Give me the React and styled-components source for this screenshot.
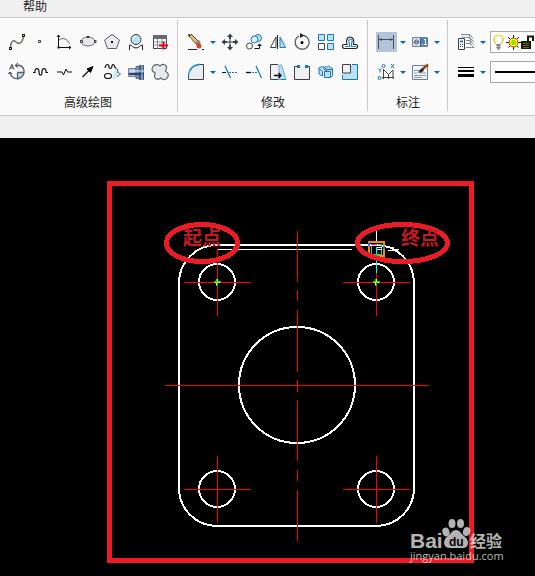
import React from 'react'
import styled, { createGlobalStyle } from 'styled-components'

const GlobalStyle = createGlobalStyle`
  body {
    margin: 0;
    background: #000;
    font-family: "Noto Sans CJK SC", sans-serif;
    font-size: 12px;
    color: #1e1e1e;
  }
`

const Page = styled.div`
  min-height: 100vh;
  display: flex;
  flex-direction: column;
`

const MenuBar = styled.nav`
  display: flex;
  height: 17px;
  padding-left: 23px;
  background: #f0f0f0;
  border-bottom: 1px solid #c8c8c8;
`

const MenuItem = styled.a`
  color: #1e1e1e;
  font-size: 12px;
  line-height: 12px;
  text-decoration: none;
`

const Ribbon = styled.header`
  display: flex;
  padding: 2px 0 4px;
  overflow: hidden;
  background: #fafafa;
  border-bottom: 1px solid #c8c8c8;
`

const Panel = styled.section`
  flex: none;
  display: flex;
  flex-direction: column;
  gap: 6px;
  padding: 10px 5px 0 ${props => props.$left || 6}px;
  border-right: 1px solid #c8c8c8;
`

const ToolRow = styled.div`
  display: flex;
  align-items: center;
  height: 24px;
`

const PanelTitle = styled.h2`
  margin: 3px 0 0;
  font-size: 12px;
  font-weight: 400;
  line-height: 18px;
  text-align: center;
`

const ToolButton = styled.button`
  width: 24px;
  height: 24px;
  padding: 0;
  border: 0;
  background: none;

  svg {
    display: block;
  }
`

const ArrowButton = styled.button`
  width: 10px;
  height: 24px;
  padding: 0;
  border: 0;
  background: none;

  svg {
    display: block;
  }
`

const Combo = styled.label`
  position: relative;
  width: 180px;
  height: 20px;
  margin-left: 2px;
  border: 1px solid #a8a8a8;
  background: #fff;

  select {
    position: absolute;
    inset: 0;
    width: 100%;
    opacity: 0;
  }

  svg {
    display: block;
  }
`

const TabStrip = styled.div`
  height: 22px;
  background: #f0f0f0;
`

const Canvas = styled.main`
  flex: 1;
  overflow: hidden;
  background: #000;

  svg {
    display: block;
  }
`

const dark = '#3c4048'
const blue = '#1a78c8'
const pale = '#b9e2f4'

const icons = {
  spline: (
    <>
      <path d="M6.500 17C7 11 9.500 9.500 12 12S18.500 14 19.500 6" stroke="#777566" strokeWidth="1.500" />
      <path d="M5.500 17.500h2v2h-2zM18.500 4.500h2v2h-2z" fill="#fff" stroke="#000" />
    </>
  ),
  point: <path d="M10.500 10.500h2v2h-2z" fill="#fff" stroke={dark} />,
  axes: (
    <>
      <path d="M6.500 5v12.500H19M5 7l1.500-2L8 7M17 16l2 1.500-2 1.500" stroke="#111" />
      <path d="M7 10c4-3 8-1 10.500 3.500" stroke="#666" />
      <path d="M5.500 16.500h2v2h-2z" fill="#111" />
    </>
  ),
  ellipse: (
    <>
      <ellipse cx="12" cy="11.500" rx="7" ry="4.500" fill="#e4e6ea" stroke="#6a6e76" />
      <path d="M4.500 10.500h2v2h-2zM18.500 10.500h1.500v2h-1.500zM11 6.500h2v1h-2z" fill="#fff" stroke="#333" />
    </>
  ),
  polygon: (
    <>
      <path d="M12 4.500l7.500 5.500-3 8.500h-9L4.500 10z" fill="#e8eaee" stroke="#5a5e66" />
      <path d="M11 11h2v2h-2z" fill="#111" />
    </>
  ),
  wipeout: (
    <>
      <circle cx="12" cy="9.500" r="5" fill={pale} stroke={dark} />
      <path d="M5.500 20v-5c3 0 3 3 6.500 3s3.500-3 6.500-3v5" stroke="#222" />
      <path d="M9 9.500c0-2 1-3 3-3" stroke="#fff" />
    </>
  ),
  table: (
    <>
      <path d="M5.500 5.500h13v13h-13z" fill="#fff" stroke={dark} />
      <path d="M5 5h14v4H5z" fill="#666b73" />
      <path d="M5.500 12h13M5.500 15h13M9.500 9v9.500M14 9v9.500" stroke="#8d9299" />
      <path d="M14.500 11.500h2v3h3.500v2h-3.500v3h-2v-3H11v-2h3.500z" fill="#e00b14" />
    </>
  ),
  helix: (
    <>
      <path d="M13.500 12.500h6.500a7 7 0 0 1-6.500 7z" fill={pale} />
      <path d="M20 10a7 7 0 1 1-14 3M12 5.500c4-1 7 1 8 5M13.500 12.500v7M13.500 12.500h6.500" stroke="#5a5e66" strokeWidth="1.300" />
      <path d="M5.500 9.500l2.500-5 2 5M6.500 8h3M14 3l-3 2.500 3 2M4 14l2-2 2 2" stroke={dark} />
    </>
  ),
  wave: <path d="M5 12.500h2c-1-5 4-5 4-1 0 5 3 5 3 0 0-4 5-4 4 1h2" stroke="#111" strokeWidth="1.200" />,
  breakLine: <path d="M5 12h5l1.500 3 2.500-6 1.500 3H20" stroke="#111" />,
  arrow: (
    <>
      <path d="M6.500 17l8-8" stroke="#111" strokeWidth="1.200" />
      <path d="M17 6.500l-2.500 6-3.500-3.500z" fill="#000" stroke="#000" />
    </>
  ),
  sketch: (
    <>
      <path d="M5 8c1-5 4-4 4-1 0 2 3 2 3-1s3-1 3 2" stroke="#111" strokeWidth="1.200" />
      <path d="M15 8c4 0 3 3 2 4 5 0 3 5 0 4 0 4-4 4-5 2l1-4z" fill="#cdeaf8" />
      <path d="M15 8c4 0 3 3 2 4 5 0 3 5 0 4" stroke="#333" strokeDasharray="2 1" />
      <ellipse cx="8" cy="16" rx="3.500" ry="2.500" stroke="#111" strokeWidth="1.200" />
    </>
  ),
  shaft: (
    <>
      <path d="M4.500 8.500H12v8H4.500z" fill="#aebfd3" stroke="#6e8299" />
      <path d="M12 6.500h3v12h-3z" fill="#8097b4" stroke="#52677f" />
      <path d="M15 5h5v15h-5z" fill="#3d5f89" />
      <path d="M5 11h15" stroke="#e9f1f8" />
      <path d="M5 14h15" stroke="#25456d" strokeWidth="2" />
      <path d="M18 5v15" stroke="#bdcbdd" />
    </>
  ),
  cloud: (
    <path
      d="M12 6c3-3 7-1 6.500 2-.3 2-1 2-1 3.500 3 1 3.500 4 2 6-2 3-5 2.500-6.500.5-2 2-6 1.500-6.500-1.500-.2-2 .8-2.500.5-4C3.500 12 3.500 8.500 5 6.500c2-3 5.500-2 7-.5z"
      fill="#e8eaee"
      stroke="#5e6269"
      strokeWidth="1.200"
    />
  ),
  erase: (
    <>
      <path d="M4 5l9 10M7 4l9 9" stroke="#4d3212" />
      <path d="M5 4.500l9 9.500" stroke="#dfae5c" strokeWidth="2.500" />
      <path d="M4 4l3 1-2 2z" fill="#222" />
      <path d="M11 13l4-3 2 3-4 3z" fill="#8a8378" />
      <circle cx="15" cy="16" r="2.500" fill="#d94a1c" />
      <path d="M4 19.500h9M18 19.500h2" stroke="#222" />
    </>
  ),
  move: (
    <>
      <path d="M12 3.500l3 3.500H9zM12 20.500l3-3.500H9zM3.500 12L7 9v6zM20.500 12L17 9v6z" fill={dark} />
      <path d="M12 7v2.500M12 14.500V17M7 12h2.500M14.500 12H17" stroke={dark} strokeWidth="2" />
      <path d="M11 11h2v2h-2z" stroke={dark} />
    </>
  ),
  copy: (
    <>
      <circle cx="16" cy="8" r="3.500" fill={pale} stroke={blue} />
      <circle cx="12.500" cy="9.500" r="3.500" fill="#d7effa" stroke={blue} />
      <circle cx="7.500" cy="16" r="3" fill="#fff" stroke={dark} />
      <path d="M12.500 18.500h5v-3" stroke="#111" />
      <path d="M15 16l2.500-2.500L20 16z" fill="#111" />
    </>
  ),
  mirror: (
    <>
      <path d="M10 7v10.500H4.500z" fill="#fff" stroke={dark} />
      <path d="M14 7v10.500h5.500z" fill={pale} stroke={blue} />
      <path d="M11.500 5v14" stroke="#222" />
    </>
  ),
  rotate: (
    <>
      <path d="M14 5.500a7 7 0 1 1-5 .5" stroke="#5a5e66" strokeWidth="1.300" />
      <path d="M10 3l4.500 2.500L10 8z" fill="#222" />
      <circle cx="12" cy="12.500" r="1.500" fill="#000" />
    </>
  ),
  array: (
    <>
      <path d="M4.500 4.500h6v6h-6zM13.500 4.500h6v6h-6zM13.500 13.500h6v6h-6z" fill={pale} stroke={blue} />
      <path d="M4.500 13.500h6v6h-6z" fill="#fff" stroke={dark} />
    </>
  ),
  offset: (
    <>
      <path d="M6 18.500c-2-1-2-4 0-4h3c-3-10 9-10 6.500 0H18c2 0 2 3 0 4z" fill="#fff" stroke="#222" strokeWidth="1.200" />
      <path d="M7 16.500h4.500v-3c-3-6 5-6 2 0v3H18" stroke="#2582cc" strokeWidth="1.200" />
    </>
  ),
  fillet: (
    <>
      <path d="M4.500 19.500V18C5 10 10 5 19.500 4.500v15z" fill="#ececef" />
      <path d="M4.500 16v3.500h15v-15H16" stroke={dark} />
      <path d="M4.500 16C5 9 9 5 16 4.500" stroke="#2388d4" strokeWidth="1.300" />
    </>
  ),
  trim: (
    <>
      <path d="M4 12.500h4" stroke="#111" />
      <path d="M7 6l5.500 12" stroke={blue} strokeWidth="1.300" />
      <path d="M11 12.500h9" stroke={blue} strokeDasharray="2 1" />
    </>
  ),
  extend: (
    <>
      <path d="M4 12.500h5" stroke="#111" strokeWidth="1.300" />
      <path d="M10 12.500h6" stroke={blue} strokeDasharray="2 1" />
      <path d="M14 6l5.500 12" stroke={blue} strokeWidth="1.300" />
    </>
  ),
  stretch: (
    <>
      <path d="M13 5h2.500l4.500 14.500h-7z" fill={pale} stroke="#6aabd0" />
      <path d="M12 4.500H4.500v15h8" fill="#f0f0f2" stroke={dark} />
      <path d="M15 19.500h5" stroke={blue} />
      <path d="M8 15.500h6M12.500 13l2.500 2.500-2.500 2.500" stroke="#000" strokeWidth="1.300" />
    </>
  ),
  breakShape: (
    <>
      <path d="M4.500 6.500h15v13h-15z" fill="#f0f0f2" />
      <path d="M7 6.500H4.500v13h15v-13H18" stroke={dark} />
      <path d="M7 5h3v3H7zM15 5h3v3h-3z" fill={blue} />
    </>
  ),
  explode: (
    <>
      <path d="M4.500 8l4-1.500 3 2 3-2.500 4 2.500v5M5 9v5l3 2M4.500 8.500l4 2.500v5M12 6l-3 2.500 4 2" fill={pale} stroke={blue} />
      <path d="M10.500 11.500h6v6h-6z" fill={pale} stroke={blue} />
      <path d="M10.500 11.500l2-2h6v6l-2 2" stroke={blue} />
    </>
  ),
  scale: (
    <>
      <path d="M4.500 4.500h15v15h-15z" fill={pale} />
      <path d="M14 4.500h5.500v15h-15V15" stroke={blue} />
      <path d="M4.500 4.500h8v8.500h-8z" fill="#f0f0f2" stroke={dark} />
    </>
  ),
  dimension: (
    <>
      <path d="M2 2h21v20H2z" fill="#b2c3da" />
      <path d="M4.500 5v14M19.500 5v14M5 9.500h14" stroke="#4a4e58" />
      <path d="M5 9.500L8 8v3zM19 9.500L16 8v3z" fill="#4a4e58" />
    </>
  ),
  tolerance: (
    <>
      <path d="M4.500 7.500h15v9h-15z" fill="#d3dfec" stroke="#7088a5" />
      <path d="M13 8h7v8h-7z" fill="#547eaa" />
      <circle cx="8.500" cy="12" r="2" stroke="#4b5f78" />
      <path d="M5.500 12h6M12.500 7.500v9" stroke="#4b5f78" />
      <path d="M16 10l1.500-1v6M14 14.500h1M16 14.500h3" stroke="#fff" />
    </>
  ),
  ordinate: (
    <>
      <path d="M9.500 9v10M8 17.500h12M10 10l4.500 4.500L19 10v9M14.500 14v5" stroke="#444" />
      <path d="M4.500 8.500l1.500 2 1.500-2M6 10.500v2M17 4l3 4M20 4l-3 4" stroke={blue} />
      <circle cx="9.500" cy="6" r="1.500" stroke={blue} />
      <circle cx="5.500" cy="18" r="1.500" stroke={blue} />
    </>
  ),
  styleEdit: (
    <>
      <path d="M4.500 5.500h15v14h-15z" fill="#f4f7fa" stroke="#687f98" />
      <path d="M6 10.500h5M6 13h3M12 13h6M6 15.500h12M6 17.500h8" stroke="#8299b1" />
      <path d="M20 4.500l-6 5" stroke="#a64021" strokeWidth="2.500" />
      <path d="M14.500 8.500c-3 0-3 3-5 4 3 .5 6 0 6.500-3z" fill="#333" />
    </>
  ),
  layers: (
    <>
      <path d="M7 4.500h9l3 4M8 7l7 .5 5 4M12 10.500h4l4 4M12 13.500h4l4 4M15 4.500l1 4M16 8l1 4M16 11l1 4M12 17.500h8" stroke="#85898e" />
      <path d="M4.500 8.500h6v11h-6z" fill="#fff" stroke={dark} />
      <path d="M6 10.500h3v2H6z" fill={blue} />
      <path d="M6 14.500h1M8 14.500h1M6 16.500h1M8 16.500h1" stroke={dark} />
    </>
  ),
  lineWeight: (
    <path d="M4 7h16v1H4zM4 10h16v2H4zM4 14h16v3H4z" fill="#000" shapeRendering="crispEdges" />
  )
}

const Tool = ({ icon, label, pressed }) => (
  <ToolButton aria-label={label} aria-pressed={pressed}>
    <svg width="24" height="24" viewBox="0 0 24 24" fill="none">{icons[icon]}</svg>
  </ToolButton>
)

const Arrow = ({ label }) => (
  <ArrowButton aria-label={label}>
    <svg width="10" height="24" viewBox="0 0 10 24">
      <path d="M2 11h6l-3 3z" fill="#0b62c4" />
    </svg>
  </ArrowButton>
)

const Hole = ({ x, y, top = 33 }) => (
  <g>
    <circle cx={x} cy={y} r="18" stroke="#fff" strokeWidth="2" />
    <path d={`M${x - 33} ${y + 0.5}h67M${x + 0.5} ${y - top}V${y + 34}`} stroke="#f00" />
  </g>
)

const Snap = ({ x, y }) => (
  <g stroke="none">
    <path d={`M${x - 3} ${y - 1}h7v2h-7zM${x - 1} ${y - 3}h2v7h-2z`} fill="#0d0" />
    <path d={`M${x} ${y - 3}h1v3h-1zM${x - 2} ${y}h2v1h-2zM${x + 1} ${y}h2v1h-2zM${x - 1} ${y + 1}h1v2h-1z`} fill="#ff0" />
  </g>
)

const Drawing = () => (
  <svg width="535" height="438" viewBox="0 138 535 438" fill="none">
    <g shapeRendering="crispEdges">
      <rect x="179" y="245" width="235" height="281" rx="38" stroke="#fff" strokeWidth="2" />
      <path d="M217 249.500h135" stroke="#fff" />
      <circle cx="297" cy="385" r="58" stroke="#fff" strokeWidth="2" />
      <Hole x={217} y={282} />
      <Hole x={376} y={282} top={19} />
      <Hole x={217} y={489} />
      <Hole x={376} y={489} />
      <path d="M165 385.500h264M297.500 231v51M297.500 290v11M297.500 310v62M297.500 380v12M297.500 400v61M297.500 470v11M297.500 490v51" stroke="#f00" />
      <Snap x={217} y={282} />
      <Snap x={376} y={282} />
      <path d="M376.500 231v12" stroke="#fff" />
      <path d="M376.500 247v26" stroke="#0ff" />
      <path d="M369 242h15v14h-15z" stroke="#ff8c00" strokeWidth="2" />
      <path d="M371.500 246v9M374 254.500h8M381.500 245v9M378 244.500h4" stroke="#00e676" />
      <path d="M371 244.500h6" stroke="#f0c" />
      <path d="M368 243h2v3h-2zM383 246h2v3h-2z" fill="#2468ff" />
      <path d="M377 247.500h5M377 249.500h5M386 247.500h8M388 250.500h6M393 249.500h6" stroke="#fff" />
    </g>

    <g stroke="#ed1c24" strokeWidth="5" shapeRendering="crispEdges">
      <rect x="109.500" y="183.500" width="362" height="377" />
      <ellipse cx="202" cy="243" rx="35.500" ry="18.500" />
      <ellipse cx="402.500" cy="243" rx="45" ry="18.500" />
    </g>
    <g fill="#c41a20" fontSize="19" fontWeight="700" fontFamily='"Noto Sans CJK SC", sans-serif'>
      <text x="183" y="245">起点</text>
      <text x="401" y="245">终点</text>
    </g>

    <g fill="#fff" opacity="0.7" fontFamily='"Liberation Sans", sans-serif'>
      <text x="410" y="548" fontSize="21" fontWeight="700">Bai</text>
      <ellipse cx="446" cy="532" rx="3.500" ry="4.500" transform="rotate(-20 446 532)" />
      <ellipse cx="452" cy="523.500" rx="3.500" ry="4.500" />
      <ellipse cx="460.500" cy="523.500" rx="3.500" ry="4.500" />
      <ellipse cx="466.500" cy="531.500" rx="3.500" ry="4.500" transform="rotate(20 466.500 531.500)" />
      <path d="M456 530c4 0 5 4 8 6 6 4 5 12-1 12h-13c-7 0-8-8-2-12 3-2 4-6 8-6z" />
      <text x="470" y="547" fontSize="16" fontWeight="700" fontFamily='"Noto Sans CJK SC", sans-serif'>经验</text>
      <text x="410" y="560" fontSize="11" fontFamily='"Open Sans", sans-serif'>jingyan.baidu.com</text>
    </g>
    <text x="449" y="546" fontSize="12" fontWeight="700" fontFamily='"Liberation Sans", sans-serif' fill="#000">du</text>
  </svg>
)

const App = () => (
  <Page>
    <GlobalStyle />
    <MenuBar>
      <MenuItem href="#help">帮助</MenuItem>
    </MenuBar>

    <Ribbon>
      <Panel $left={4}>
        <ToolRow>
          <Tool icon="spline" label="样条曲线" />
          <Tool icon="point" label="点" />
          <Tool icon="axes" label="公式曲线" />
          <Tool icon="ellipse" label="椭圆" />
          <Tool icon="polygon" label="正多边形" />
          <Tool icon="wipeout" label="局部放大" />
          <Tool icon="table" label="表格" />
        </ToolRow>
        <ToolRow>
          <Tool icon="helix" label="圆弧" />
          <Tool icon="wave" label="波浪线" />
          <Tool icon="breakLine" label="双折线" />
          <Tool icon="arrow" label="箭头" />
          <Tool icon="sketch" label="手绘" />
          <Tool icon="shaft" label="轴" />
          <Tool icon="cloud" label="云线" />
        </ToolRow>
        <PanelTitle>高级绘图</PanelTitle>
      </Panel>

      <Panel>
        <ToolRow>
          <Tool icon="erase" label="删除" />
          <Arrow label="删除选项" />
          <Tool icon="move" label="平移" />
          <Tool icon="copy" label="复制" />
          <Tool icon="mirror" label="镜像" />
          <Tool icon="rotate" label="旋转" />
          <Tool icon="array" label="阵列" />
          <Tool icon="offset" label="等距线" />
        </ToolRow>
        <ToolRow>
          <Tool icon="fillet" label="圆角" />
          <Arrow label="圆角选项" />
          <Tool icon="trim" label="裁剪" />
          <Tool icon="extend" label="延伸" />
          <Tool icon="stretch" label="拉伸" />
          <Tool icon="breakShape" label="打断" />
          <Tool icon="explode" label="分解" />
          <Tool icon="scale" label="缩放" />
        </ToolRow>
        <PanelTitle>修改</PanelTitle>
      </Panel>

      <Panel>
        <ToolRow>
          <Tool icon="dimension" label="尺寸" pressed />
          <Arrow label="尺寸选项" />
          <Tool icon="tolerance" label="公差" />
          <Arrow label="公差选项" />
        </ToolRow>
        <ToolRow>
          <Tool icon="ordinate" label="坐标" />
          <Arrow label="坐标选项" />
          <Tool icon="styleEdit" label="样式" />
          <Arrow label="样式选项" />
        </ToolRow>
        <PanelTitle>标注</PanelTitle>
      </Panel>

      <Panel>
        <ToolRow>
          <Tool icon="layers" label="图层" />
          <Arrow label="图层选项" />
          <Combo>
            <svg width="60" height="20" viewBox="0 0 60 20" fill="none">
              <path d="M5.500 12.500C2 9 2 3.500 7.500 3.500S13 9 9.500 12.500z" fill="#fff" stroke="#999" />
              <path d="M4.500 3.500L3 6v3l2 3M10.500 3.500L12 6v3l-2 3M5 3.500h5" stroke="#f3e600" />
              <path d="M5.500 13.500h4M5.500 15.500h4M6.500 17h2" stroke="#777" strokeWidth="1.500" />
              <path d="M22.500 3v15M15 10.500h15M17 5l11 11M28 5L17 16" stroke="#222" strokeDasharray="3 1" />
              <circle cx="22.500" cy="10.500" r="4.500" fill="#ff0" stroke="#e02020" />
              <circle cx="22.500" cy="10.500" r="2.500" fill="#7ee500" />
              <path d="M30 9h10v8H30z" fill="#17180a" />
              <path d="M32 11.500h6M32 13.500h6M32 15.500h6" stroke="#66621f" />
              <path d="M37 9V4.500h5V9" stroke="#17180a" strokeWidth="2" />
            </svg>
            <select aria-label="图层"><option>0</option></select>
          </Combo>
        </ToolRow>
        <ToolRow>
          <Tool icon="lineWeight" label="线宽" />
          <Arrow label="线宽选项" />
          <Combo>
            <svg width="100%" height="20">
              <path d="M4 9h140v2H4z" fill="#000" />
            </svg>
            <select aria-label="线型"><option>0</option></select>
          </Combo>
        </ToolRow>
      </Panel>
    </Ribbon>
    <TabStrip />

    <Canvas>
      <Drawing />
    </Canvas>
  </Page>
)

export default App
